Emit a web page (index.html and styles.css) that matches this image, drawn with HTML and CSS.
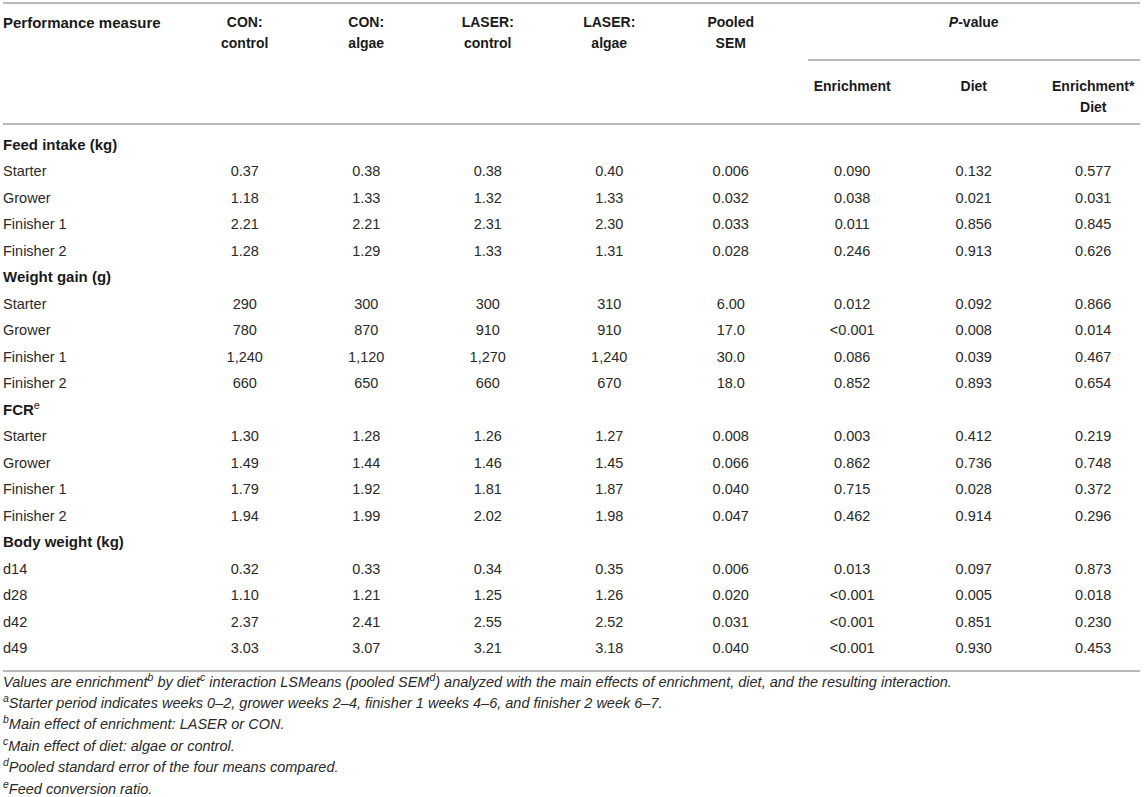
FILE: index.html
```html
<!DOCTYPE html>
<html lang="en">
<head>
  <meta charset="UTF-8">
  <title>Performance measures by enrichment and diet</title>
  <link rel="stylesheet" href="styles.css">
</head>
<body>

  <table class="perf">
    <colgroup>
      <col class="col-label">
      <col class="col-num"><col class="col-num"><col class="col-num"><col class="col-num">
      <col class="col-num"><col class="col-num"><col class="col-num">
      <col class="col-last">
    </colgroup>
    <thead>
      <tr>
        <th rowspan="2" class="label">Performance measure</th>
        <th rowspan="2">CON:<br>control</th>
        <th rowspan="2">CON:<br>algae</th>
        <th rowspan="2">LASER:<br>control</th>
        <th rowspan="2">LASER:<br>algae</th>
        <th rowspan="2">Pooled<br>SEM</th>
        <th colspan="3" class="pgroup"><div class="pgroup-title"><i>P</i>-value</div></th>
      </tr>
      <tr class="sub">
        <th>Enrichment</th>
        <th>Diet</th>
        <th class="last">Enrichment*<br>Diet</th>
      </tr>
    </thead>
    <tbody>
      <tr class="group first"><td colspan="9">Feed intake (kg)</td></tr>
      <tr><td class="label">Starter</td><td>0.37</td><td>0.38</td><td>0.38</td><td>0.40</td><td>0.006</td><td>0.090</td><td>0.132</td><td class="last">0.577</td></tr>
      <tr><td class="label">Grower</td><td>1.18</td><td>1.33</td><td>1.32</td><td>1.33</td><td>0.032</td><td>0.038</td><td>0.021</td><td class="last">0.031</td></tr>
      <tr><td class="label">Finisher 1</td><td>2.21</td><td>2.21</td><td>2.31</td><td>2.30</td><td>0.033</td><td>0.011</td><td>0.856</td><td class="last">0.845</td></tr>
      <tr><td class="label">Finisher 2</td><td>1.28</td><td>1.29</td><td>1.33</td><td>1.31</td><td>0.028</td><td>0.246</td><td>0.913</td><td class="last">0.626</td></tr>

      <tr class="group"><td colspan="9">Weight gain (g)</td></tr>
      <tr><td class="label">Starter</td><td>290</td><td>300</td><td>300</td><td>310</td><td>6.00</td><td>0.012</td><td>0.092</td><td class="last">0.866</td></tr>
      <tr><td class="label">Grower</td><td>780</td><td>870</td><td>910</td><td>910</td><td>17.0</td><td>&lt;0.001</td><td>0.008</td><td class="last">0.014</td></tr>
      <tr><td class="label">Finisher 1</td><td>1,240</td><td>1,120</td><td>1,270</td><td>1,240</td><td>30.0</td><td>0.086</td><td>0.039</td><td class="last">0.467</td></tr>
      <tr><td class="label">Finisher 2</td><td>660</td><td>650</td><td>660</td><td>670</td><td>18.0</td><td>0.852</td><td>0.893</td><td class="last">0.654</td></tr>

      <tr class="group"><td colspan="9">FCR<sup>e</sup></td></tr>
      <tr><td class="label">Starter</td><td>1.30</td><td>1.28</td><td>1.26</td><td>1.27</td><td>0.008</td><td>0.003</td><td>0.412</td><td class="last">0.219</td></tr>
      <tr><td class="label">Grower</td><td>1.49</td><td>1.44</td><td>1.46</td><td>1.45</td><td>0.066</td><td>0.862</td><td>0.736</td><td class="last">0.748</td></tr>
      <tr><td class="label">Finisher 1</td><td>1.79</td><td>1.92</td><td>1.81</td><td>1.87</td><td>0.040</td><td>0.715</td><td>0.028</td><td class="last">0.372</td></tr>
      <tr><td class="label">Finisher 2</td><td>1.94</td><td>1.99</td><td>2.02</td><td>1.98</td><td>0.047</td><td>0.462</td><td>0.914</td><td class="last">0.296</td></tr>

      <tr class="group"><td colspan="9">Body weight (kg)</td></tr>
      <tr><td class="label">d14</td><td>0.32</td><td>0.33</td><td>0.34</td><td>0.35</td><td>0.006</td><td>0.013</td><td>0.097</td><td class="last">0.873</td></tr>
      <tr><td class="label">d28</td><td>1.10</td><td>1.21</td><td>1.25</td><td>1.26</td><td>0.020</td><td>&lt;0.001</td><td>0.005</td><td class="last">0.018</td></tr>
      <tr><td class="label">d42</td><td>2.37</td><td>2.41</td><td>2.55</td><td>2.52</td><td>0.031</td><td>&lt;0.001</td><td>0.851</td><td class="last">0.230</td></tr>
      <tr class="final"><td class="label">d49</td><td>3.03</td><td>3.07</td><td>3.21</td><td>3.18</td><td>0.040</td><td>&lt;0.001</td><td>0.930</td><td class="last">0.453</td></tr>
    </tbody>
  </table>

  <!-- footnotes below the table -->
  <div class="notes">
    <p>Values are enrichment<sup>b</sup> by diet<sup>c</sup> interaction LSMeans (pooled SEM<sup>d</sup>) analyzed with the main effects of enrichment, diet, and the resulting interaction.</p>
    <p><sup>a</sup>Starter period indicates weeks 0–2, grower weeks 2–4, finisher 1 weeks 4–6, and finisher 2 week 6–7.</p>
    <p><sup>b</sup>Main effect of enrichment: LASER or CON.</p>
    <p><sup>c</sup>Main effect of diet: algae or control.</p>
    <p><sup>d</sup>Pooled standard error of the four means compared.</p>
    <p><sup>e</sup>Feed conversion ratio.</p>
  </div>

</body>
</html>
```

FILE: styles.css
```css
/* base */
body {
  margin: 0;
  padding: 2px 5px 0 3px;
  font-family: "Liberation Sans", Arial, sans-serif;
  color: #222;
  background: #fff;
}

sup {
  font-size: 0.72em;
  line-height: 0;
  vertical-align: super;
}

/* table */
.perf {
  width: 1137px;
  table-layout: fixed;
  border-collapse: separate;
  border-spacing: 0;
  font-size: 14.5px;
}
.col-label { width: 181px; }
.col-num { width: 121.5px; }
.col-last { width: 105.5px; }

/* header */
.perf thead th {
  font-size: 14px;
  font-weight: bold;
  line-height: 21px;
  text-align: center;
  vertical-align: top;
  color: #1a1a1a;
}
.perf thead tr:first-child th {
  border-top: 2px solid #b9b9b9;
  padding: 8px 0 0;
}
.perf thead th[rowspan],
.perf thead .sub th {
  border-bottom: 2px solid #b9b9b9;
}
.perf thead tr:first-child th.label {
  text-align: left;
  font-size: 15px;
}
.perf thead .sub th {
  padding: 15px 0 5px;
}
.perf thead tr:first-child th.pgroup {
  padding: 0 0 0 16px;
}
.pgroup-title {
  padding: 8px 0 26px;
  border-bottom: 2px solid #b9b9b9;
}
.perf thead .sub th.last {
  padding-left: 12px;
}

/* body rows */
.perf td {
  line-height: 18px;
  padding: 4.25px 0;
  text-align: center;
  color: #2a2a2a;
}
.perf td.label {
  text-align: left;
}
.perf td.last {
  padding-left: 12px;
}
.perf tr.group td {
  text-align: left;
  font-size: 15px;
  font-weight: bold;
  color: #1a1a1a;
}
.perf tr.group sup {
  font-weight: normal;
}
.perf tr.first td {
  padding-top: 10.5px;
}
.perf tr.final td {
  padding-bottom: 12.5px;
  border-bottom: 2px solid #b9b9b9;
}

/* footnotes */
.notes {
  font-size: 14.5px;
  font-style: italic;
  line-height: 21.4px;
  color: #2a2a2a;
}
.notes p {
  margin: 0;
}
```
